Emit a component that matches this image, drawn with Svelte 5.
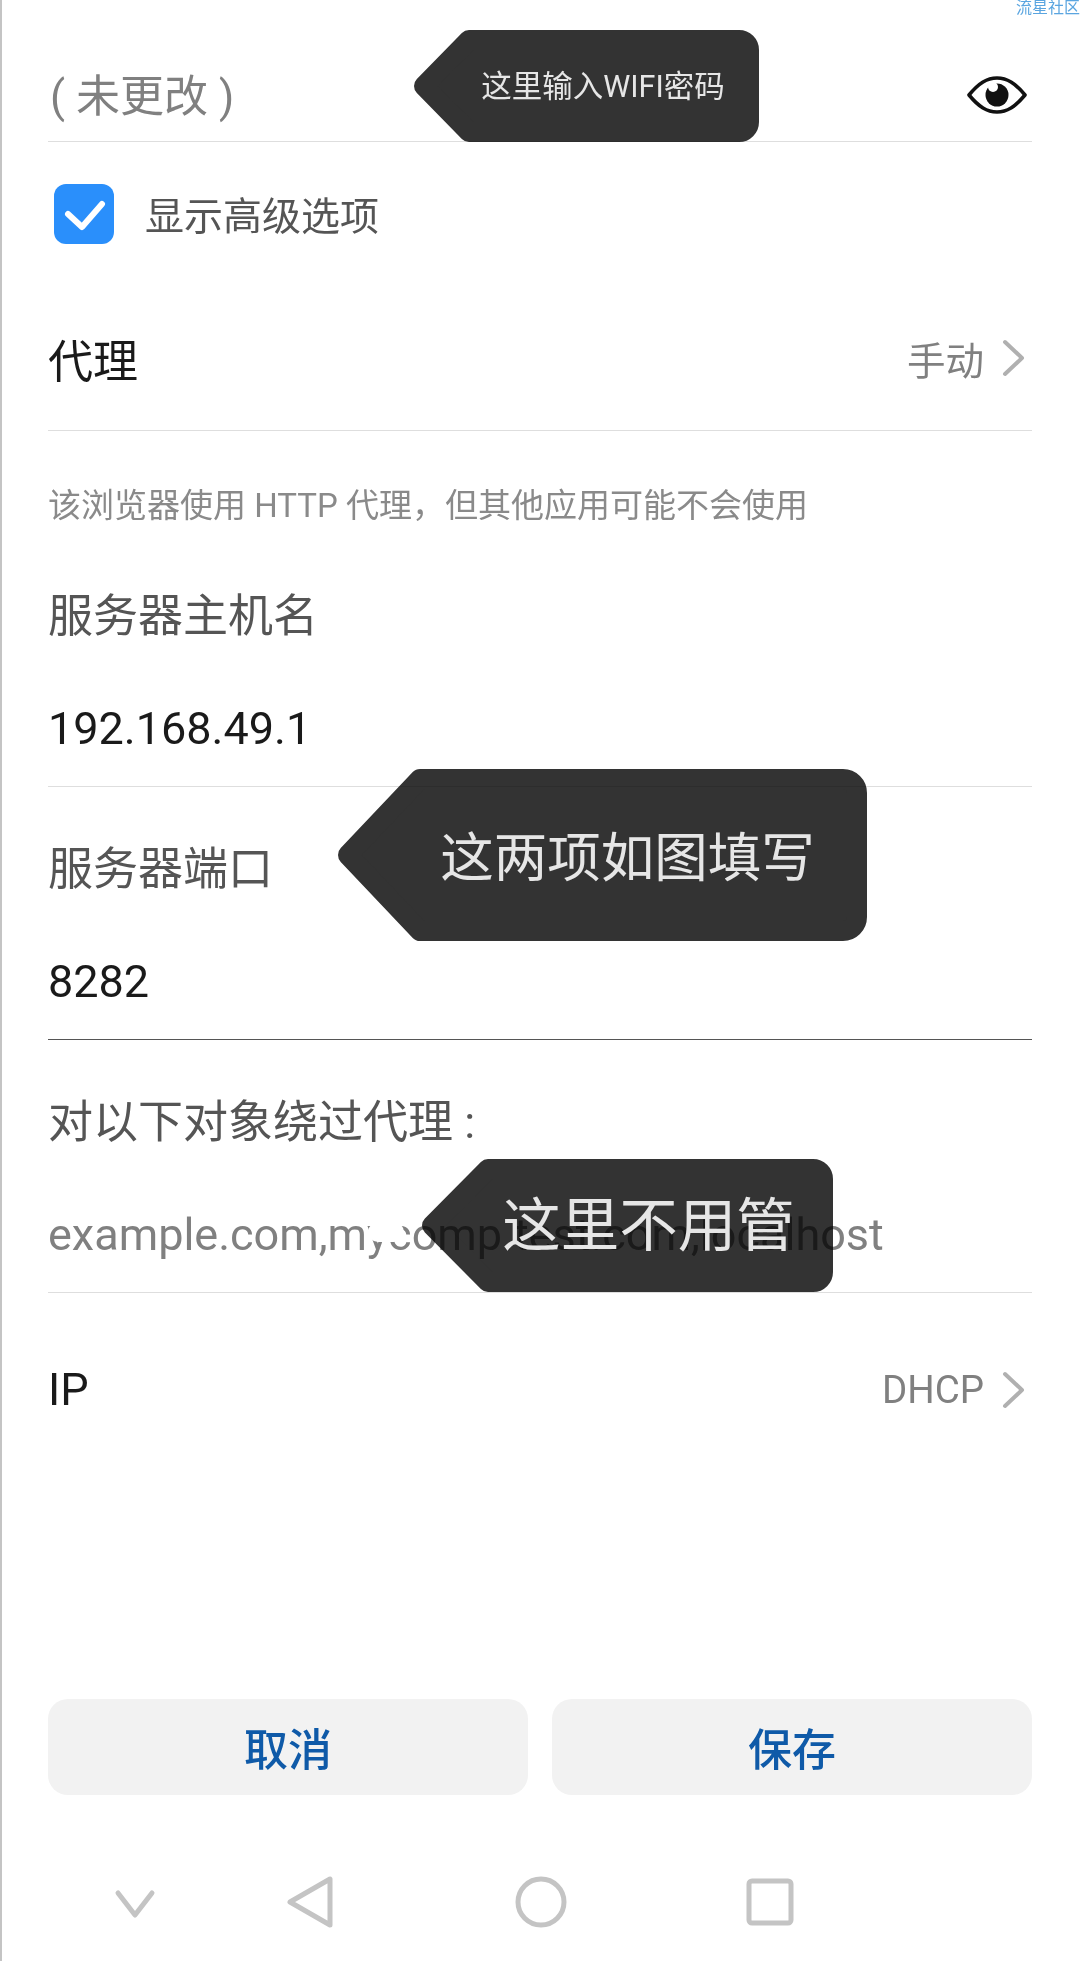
<script lang="ts">
  const fields = [
    { label: '服务器主机名', value: '192.168.49.1' },
    { label: '服务器端口', value: '8282', active: true },
    { label: '对以下对象绕过代理 :', value: 'example.com,mycomp.test.com,localhost', hint: true }
  ];

  const notes = [
    { text: '这里输入WIFI密码', cls: 'note-wifi', w: 345, h: 112, tip: 49, r: 10 },
    { text: '这两项如图填写', cls: 'note-proxy', w: 529, h: 172, tip: 76, r: 14 },
    { text: '这里不用管', cls: 'note-skip', w: 411, h: 133, tip: 60, r: 10 }
  ];

  // arrow outline, the wide round stroke softens the corners at the tip
  function notePath(n) {
    const right = n.w - 10;
    const bottom = n.h - 10;
    return `M${n.tip + 6} 10H${right - n.r}A${n.r} ${n.r} 0 0 1 ${right} ${10 + n.r}V${bottom - n.r}A${n.r} ${n.r} 0 0 1 ${right - n.r} ${bottom}H${n.tip + 6}L10 ${n.h / 2}Z`;
  }
</script>

<div class="page">
  <div class="watermark">流星社区</div>

  <div class="row password">
    <span class="placeholder">( 未更改 )</span>
    <svg class="eye" viewBox="0 0 60 38" width="60" height="38">
      <path d="M2 19C12 7 20 2 30 2s18 5 28 17C48 31 40 36 30 36S12 31 2 19z" fill="none" stroke="#111" stroke-width="3.6" stroke-linejoin="round" />
      <circle cx="30" cy="19" r="11.5" fill="#111" />
      <circle cx="26" cy="11" r="5" fill="#fff" />
    </svg>
  </div>

  <div class="row advanced">
    <span class="checkbox">
      <svg viewBox="0 0 60 60" width="60" height="60">
        <path d="M14 30l14 13 20-23" fill="none" stroke="#fff" stroke-width="6" stroke-linecap="round" stroke-linejoin="round" />
      </svg>
    </span>
    <span class="advanced-label">显示高级选项</span>
  </div>

  <div class="row link proxy">
    <span class="link-title">代理</span>
    <span class="link-value">手动</span>
    <svg class="chevron" viewBox="0 0 24 38" width="24" height="38">
      <path d="M3 3l17 16L3 35" fill="none" stroke="#b0b0b0" stroke-width="4" stroke-linecap="round" stroke-linejoin="round" />
    </svg>
  </div>

  <p class="hint">该浏览器使用 HTTP 代理，但其他应用可能不会使用</p>

  {#each fields as f}
    <div class="field" class:active={f.active}>
      <div class="field-label">{f.label}</div>
      <div class="field-value" class:muted={f.hint}>{f.value}</div>
    </div>
  {/each}

  <div class="row link ip">
    <span class="link-title">IP</span>
    <span class="link-value">DHCP</span>
    <svg class="chevron" viewBox="0 0 24 38" width="24" height="38">
      <path d="M3 3l17 16L3 35" fill="none" stroke="#b0b0b0" stroke-width="4" stroke-linecap="round" stroke-linejoin="round" />
    </svg>
  </div>

  <div class="spacer"></div>

  <div class="actions">
    <button>取消</button>
    <button>保存</button>
  </div>

  <div class="nav">
    <svg viewBox="0 0 60 60" width="60" height="60">
      <path d="M13 21l17 22 17-22" fill="none" stroke="#c4c4c4" stroke-width="5" stroke-linecap="round" stroke-linejoin="round" />
    </svg>
    <svg viewBox="0 0 60 60" width="60" height="60">
      <path d="M52 7v46L12 30z" fill="none" stroke="#c4c4c4" stroke-width="5" stroke-linejoin="round" />
    </svg>
    <svg viewBox="0 0 60 60" width="60" height="60">
      <circle cx="31" cy="30" r="23" fill="none" stroke="#c4c4c4" stroke-width="5" />
    </svg>
    <svg viewBox="0 0 60 60" width="60" height="60">
      <rect x="9" y="9" width="42" height="42" rx="3" fill="none" stroke="#c4c4c4" stroke-width="5" />
    </svg>
  </div>

  <!-- leftover of the editing on the screenshot, over the placeholder text -->
  <div class="smudge"></div>

  <!-- arrows pasted over the screenshot -->
  {#each notes as n}
    <div class="note {n.cls}" style="width: {n.w}px; height: {n.h}px">
      <svg class="note-bg" width={n.w} height={n.h} viewBox="0 0 {n.w} {n.h}">
        <path d={notePath(n)} fill="#333" stroke="#333" stroke-width="20" stroke-linejoin="round" />
      </svg>
      <span class="note-text">{n.text}</span>
    </div>
  {/each}
</div>

<style>
  :global(body) {
    margin: 0;
    background: #fff;
  }

  .page {
    position: relative;
    width: 1080px;
    height: 1961px;
    box-sizing: border-box;
    padding: 0 48px 0 46px;
    display: flex;
    flex-direction: column;
    overflow: hidden;
    border-left: 2px solid #c4c4c4;
    font-family: Roboto, "Noto Sans CJK SC", sans-serif;
    color: #1a1a1a;
  }

  .watermark {
    position: absolute;
    top: 0;
    right: 0;
    font-size: 16px;
    line-height: 16px;
    color: #5aa5e0;
  }

  .row {
    display: flex;
    align-items: center;
  }

  .password {
    height: 142px;
    box-sizing: border-box;
    padding-top: 48px;
    border-bottom: 1px solid #dedede;
    justify-content: space-between;
  }

  .placeholder {
    font-size: 44px;
    color: #808080;
    margin: -4px 0 0 2px;
  }

  .eye {
    margin-right: 5px;
  }

  .advanced {
    height: 146px;
    box-sizing: border-box;
    gap: 31px;
    padding: 0 0 2px 6px;
  }

  .checkbox {
    width: 60px;
    height: 60px;
    border-radius: 12px;
    background: #2a8ffb;
    display: block;
  }

  .checkbox svg {
    display: block;
  }

  .advanced-label {
    font-size: 39px;
    color: #555;
    margin-top: -2px;
  }

  .link {
    border-bottom: 1px solid transparent;
  }

  .proxy {
    height: 143px;
    box-sizing: border-box;
    padding-bottom: 2px;
    border-bottom-color: #dedede;
  }

  .ip {
    height: 194px;
    box-sizing: border-box;
  }

  .link-title {
    font-size: 45px;
    margin-right: auto;
  }

  .link-value {
    font-size: 38.5px;
    color: #808080;
    margin-right: 18px;
  }

  .chevron {
    margin-right: 6px;
  }

  .hint {
    margin: 0;
    padding: 53px 0 6px;
    font-size: 33px;
    line-height: 44px;
    color: #8a8a8a;
  }

  .field {
    padding: 47px 0 27px;
    border-bottom: 1px solid #dedede;
  }

  .field.active {
    border-bottom-color: #555;
  }

  .field-label {
    font-size: 45px;
    line-height: 72px;
    color: #555;
  }

  .field-value {
    margin-top: 46px;
    font-size: 45px;
    line-height: 60px;
  }

  .field-value.muted {
    color: #808080;
  }

  .spacer {
    flex: 1;
  }

  .actions {
    display: grid;
    grid-template-columns: 1fr 1fr;
    gap: 24px;
  }

  .actions button {
    height: 96px;
    border: 0;
    border-radius: 20px;
    background: #f2f2f2;
    color: #0f5aa8;
    font-family: inherit;
    font-size: 44px;
    font-weight: 500;
    padding: 0;
  }

  .nav {
    height: 166px;
    display: grid;
    grid-template-columns: 173px 232px 230px 60px;
    margin-left: 57px;
    align-items: center;
  }

  .nav svg {
    display: block;
    margin-top: 48px;
  }

  .smudge {
    position: absolute;
    left: 366px;
    top: 1222px;
    width: 36px;
    height: 20px;
    background: #fff;
    border-radius: 10px;
  }

  .note {
    position: absolute;
    display: flex;
    align-items: center;
    justify-content: center;
    color: #e6e6e6;
  }

  .note-bg {
    position: absolute;
    inset: 0;
    mix-blend-mode: multiply;
  }

  .note-text {
    position: relative;
    white-space: nowrap;
  }

  .note-wifi {
    left: 412px;
    top: 30px;
    font-size: 30.5px;
    align-items: flex-start;
  }

  .note-wifi .note-text {
    margin: 32px 0 0 33px;
  }

  .note-proxy {
    left: 336px;
    top: 769px;
    font-size: 53.5px;
  }

  .note-proxy .note-text {
    margin: -4px 0 0 50px;
  }

  .note-skip {
    left: 420px;
    top: 1159px;
    font-size: 58.5px;
  }

  .note-skip .note-text {
    margin: -10px 0 0 42px;
  }
</style>
